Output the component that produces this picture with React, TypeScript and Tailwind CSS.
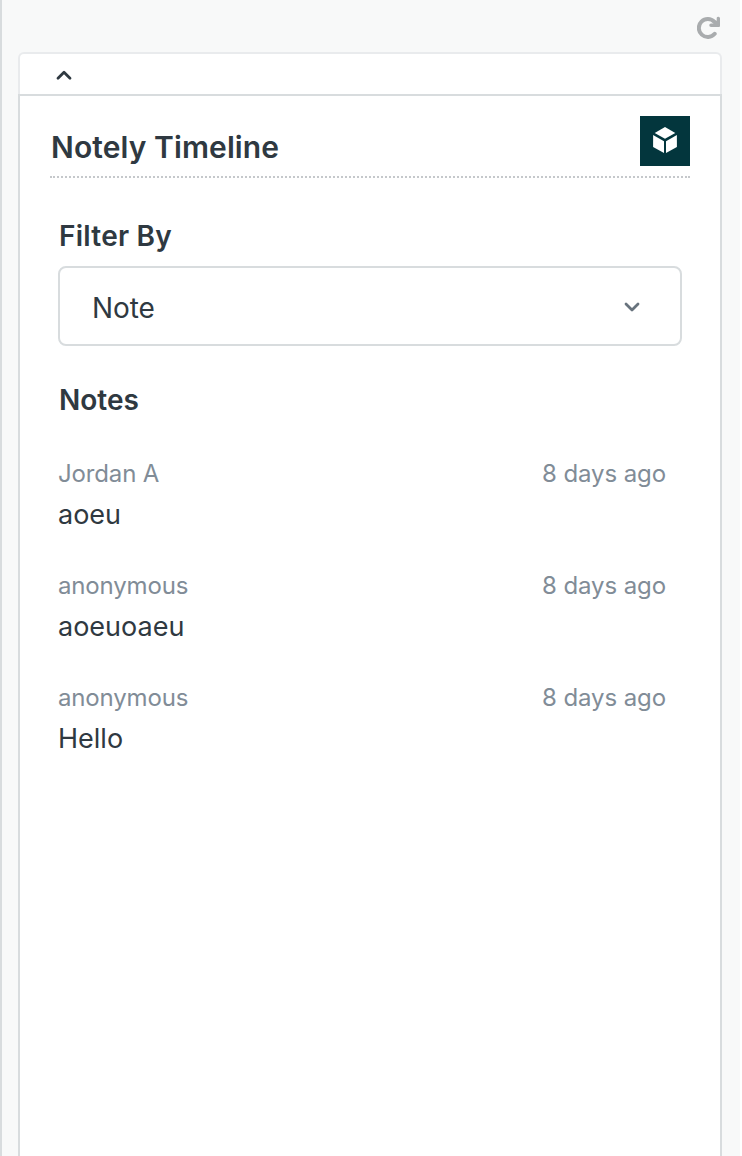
import React from "react";

type Note = { id: number; author: string; age: string; body: string };

const notes: Note[] = [
  { id: 1, author: "Jordan A", age: "8 days ago", body: "aoeu" },
  { id: 2, author: "anonymous", age: "8 days ago", body: "aoeuoaeu" },
  { id: 3, author: "anonymous", age: "8 days ago", body: "Hello" },
];

function RefreshIcon() {
  return (
    <svg width="24" height="24" viewBox="0 0 24 24" fill="none" aria-hidden="true">
      <path d="M17.700 17.800A9 9 0 1 1 17.400 5.800L19 7.300" stroke="#a9acae" strokeWidth="4" strokeLinecap="round" />
      <path d="M19.700 1.800a1.700 1.700 0 0 1 3.300.4V10a1 1 0 0 1-1 1h-8a1.700 1.700 0 0 1 0-3.500h2.500l3.200-3z" fill="#a9acae" />
    </svg>
  );
}

function CubeIcon() {
  return (
    <svg width="50" height="50" viewBox="0 0 50 50" fill="#fff" aria-hidden="true">
      <path d="M25 11 35.300 16.900 25 22.700 14.700 16.900z" />
      <path d="M13.100 18.900 24 25.200V37L13.100 30.900z" />
      <path d="M36.900 18.900 26 25.200V37L36.900 30.900z" />
    </svg>
  );
}

function NoteRow({ note }: { note: Note }) {
  return (
    <li className="h-28">
      <div className="flex h-9 items-center justify-between pr-4 text-[24px] leading-9 tracking-[-0.15px] text-[#818c97]">
        <span>{note.author}</span>
        <span className="tracking-[-0.1px]">{note.age}</span>
      </div>
      <p className="mt-[2px] text-[27px] leading-[42px]">{note.body}</p>
    </li>
  );
}

export default function App() {
  return (
    <div className="h-[1156px] w-[742px] overflow-hidden bg-white font-['Inter',sans-serif] text-[#2f3941]">
      <div className="flex h-full w-[740px] flex-col border-l-2 border-[#d8dcde] bg-[#f8f9f9]">
        <header className="flex h-[52px] shrink-0 justify-end pt-4 pr-[19px]">
          <button aria-label="Refresh" className="h-6">
            <RefreshIcon />
          </button>
        </header>
        <main className="ml-4 flex w-[704px] grow flex-col">
          <div className="h-[42px] shrink-0 rounded-t-[6px] border-2 border-b-0 border-[#e9ebed] bg-white pt-[15px] pl-9">
            <svg width="16" height="12" viewBox="0 0 16 12" fill="none" aria-hidden="true">
              <path d="m2 9.300 6-6 6 6" stroke="#2f3941" strokeWidth="2.800" strokeLinecap="round" strokeLinejoin="round" />
            </svg>
          </div>
          <section className="grow border-2 border-b-0 border-[#d8dcde] bg-white px-[30px] pt-5">
            <div className="flex h-[62px] justify-between border-b-2 border-dotted border-[#c5c8cb]">
              <h1 className="pt-[10px] pl-px text-[30px] leading-[42px] font-semibold tracking-[0.1px]">Notely Timeline</h1>
              <div className="size-[50px] bg-[#03363d]">
                <CubeIcon />
              </div>
            </div>
            <div className="px-2 pt-[38px]">
              <h2 className="h-[50px] pl-px text-[28px] leading-10 font-semibold tracking-[0.25px]">Filter By</h2>
              <button className="flex h-20 w-full items-center justify-between rounded-lg border-2 border-[#d8dcde] pt-[3px] pr-10 pl-8 text-[28px]">
                <span className="pt-px tracking-[-0.1px]">Note</span>
                <svg width="16" height="12" viewBox="0 0 16 12" fill="none" aria-hidden="true">
                  <path d="m2 2 6 6 6-6" stroke="#68737d" strokeWidth="2.800" strokeLinecap="round" strokeLinejoin="round" />
                </svg>
              </button>
              <h2 className="mt-[34px] pl-px text-[28px] leading-10 font-semibold">Notes</h2>
              <ul className="mt-9">
                {notes.map((note) => (
                  <NoteRow key={note.id} note={note} />
                ))}
              </ul>
            </div>
          </section>
        </main>
      </div>
    </div>
  );
}
